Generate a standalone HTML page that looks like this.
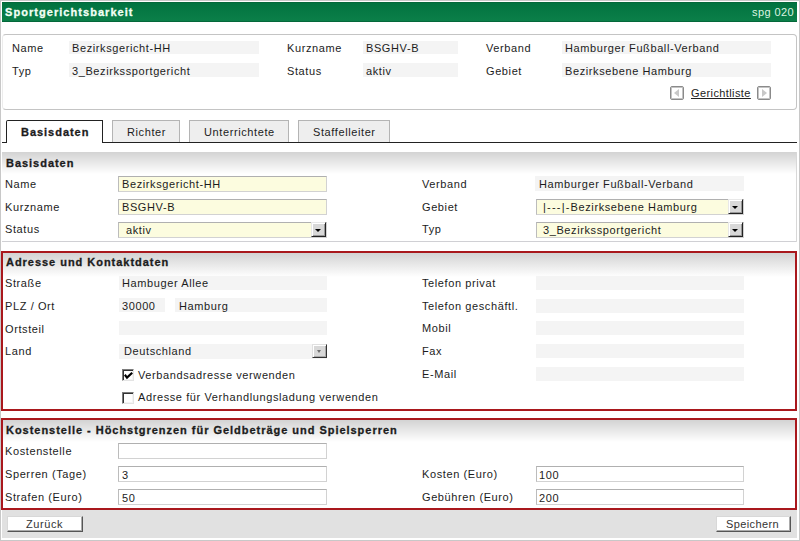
<!DOCTYPE html>
<html><head><meta charset="utf-8">
<style>
*{box-sizing:border-box;margin:0;padding:0}
html,body{width:800px;height:541px;overflow:hidden;background:#fff}
body{position:relative;font-family:"Liberation Sans",sans-serif;font-size:12px;color:#1c1c1c}
.a{position:absolute}
.t{position:absolute;white-space:nowrap;line-height:14px;font-size:11px;letter-spacing:0.6px;}
.b{font-weight:bold;letter-spacing:0.97px;-webkit-text-stroke:0.3px currentColor}
.frame{left:0;top:0;width:800px;height:541px;border:1px solid #c8c8c8}
.title{left:2px;top:2px;width:795px;height:20px;background:linear-gradient(#017340,#0b7f49);border-top:1px solid #04683a;border-bottom:1px solid #04683a}
.info{left:2px;top:34px;width:795px;height:76px;border:1px solid #c4c4c4;border-left-color:#ececec;border-radius:4px}
.fg{position:absolute;background:#f4f4f4}
.tab{position:absolute;top:120px;height:22px;background:#eee;border:1px solid #b4b4b4;border-bottom:none}
.tabact{position:absolute;top:120px;height:23px;background:#fff;border:1px solid #222;border-bottom:none;border-radius:2px 0 0 0}
.sec{position:absolute;left:2px;width:795px}
.grad{position:absolute;background:linear-gradient(#d3d3d3,#fff)}
.red{position:absolute;border:2px solid #a9181d}
.inp{position:absolute;background:#fcfcdf;border:1px solid;border-color:#b0b0b0 #d2d2d2 #d2d2d2 #bcbcbc}
.inw{position:absolute;background:#fff;border:1px solid;border-color:#b0b0b0 #d2d2d2 #d2d2d2 #bcbcbc}
.sel{position:absolute;background:#fcfcdf;border:1px solid;border-color:#b0b0b0 #d2d2d2 #d2d2d2 #bcbcbc}
.arr{position:absolute;width:15px;height:15px;background:#d8d8d8;border:1px solid;border-color:#e8e8e8 #222 #222 #e8e8e8;box-shadow:inset 1px 1px 0 #fff,inset -1px -1px 0 #999}
.arr:after{content:"";position:absolute;left:3px;top:6px;border-left:3px solid transparent;border-right:3px solid transparent;border-top:3px solid #000}
.btn{position:absolute;background:#fff;border:1px solid;border-color:#d8d8d8 #555 #555 #d8d8d8;box-shadow:inset -1px -1px 0 #aaa}
.cb{position:absolute;width:12px;height:12px;background:#fff;border:1px solid;border-color:#7c7c7c #e4e4e4 #e4e4e4 #7c7c7c;box-shadow:inset 1px 1px 0 #333,inset -1px -1px 0 #f4f4f4}
</style></head><body>
<div class="a frame"></div>
<div class="a title"></div>
<div class="t b" style="left:5px;top:5px;color:#f2fff4;letter-spacing:1.05px">Sportgerichtsbarkeit</div>
<div class="t" style="left:752px;top:5px;color:#dcf5e2;letter-spacing:0.4px">spg 020</div>

<!-- info panel -->
<div class="a info"></div>
<div class="t" style="left:12px;top:41px">Name</div>
<div class="fg" style="left:69px;top:41px;width:190px;height:13px"></div>
<div class="t" style="left:72px;top:41px">Bezirksgericht-HH</div>
<div class="t" style="left:12px;top:64px">Typ</div>
<div class="fg" style="left:69px;top:63px;width:190px;height:14px"></div>
<div class="t" style="left:72px;top:64px">3_Bezirkssportgericht</div>

<div class="t" style="left:287px;top:41px">Kurzname</div>
<div class="fg" style="left:363px;top:41px;width:95px;height:13px"></div>
<div class="t" style="left:366px;top:41px">BSGHV-B</div>
<div class="t" style="left:287px;top:64px">Status</div>
<div class="fg" style="left:363px;top:63px;width:95px;height:14px"></div>
<div class="t" style="left:366px;top:64px">aktiv</div>

<div class="t" style="left:486px;top:41px">Verband</div>
<div class="fg" style="left:562px;top:41px;width:209px;height:13px"></div>
<div class="t" style="left:565px;top:41px">Hamburger Fußball-Verband</div>
<div class="t" style="left:486px;top:64px">Gebiet</div>
<div class="fg" style="left:562px;top:63px;width:209px;height:14px"></div>
<div class="t" style="left:565px;top:64px">Bezirksebene Hamburg</div>

<div class="a" style="left:670px;top:86px;width:14px;height:14px;border:1px solid #8a8a8a;border-radius:2px;box-shadow:inset 0 0 0 1px #c4c4c4;background:#fff"></div>
<div class="a" style="left:674px;top:89px;width:0;height:0;border-top:4px solid transparent;border-bottom:4px solid transparent;border-right:5px solid #c8c8c8"></div>
<div class="t" style="left:691px;top:86px;text-decoration:underline;letter-spacing:0.4px;color:#222">Gerichtliste</div>
<div class="a" style="left:757px;top:86px;width:14px;height:14px;border:1px solid #8a8a8a;border-radius:2px;box-shadow:inset 0 0 0 1px #c4c4c4;background:#fff"></div>
<div class="a" style="left:762px;top:89px;width:0;height:0;border-top:4px solid transparent;border-bottom:4px solid transparent;border-left:5px solid #c8c8c8"></div>

<!-- tabs -->
<div class="a" style="left:2px;top:142px;width:795px;height:1px;background:#222"></div>
<div class="tabact" style="left:6px;width:97px"></div>
<div class="t b" style="left:21px;top:125px">Basisdaten</div>
<div class="tab" style="left:112px;width:68px"></div>
<div class="t" style="left:127px;top:125px">Richter</div>
<div class="tab" style="left:189px;width:100px"></div>
<div class="t" style="left:204px;top:125px">Unterrichtete</div>
<div class="tab" style="left:298px;width:92px"></div>
<div class="t" style="left:313px;top:125px">Staffelleiter</div>

<!-- section 1 -->
<div class="grad" style="left:2px;top:152px;width:795px;height:22px"></div>
<div class="a" style="left:2px;top:241px;width:795px;height:1px;background:#d0d0d4"></div>
<div class="a" style="left:796px;top:152px;width:1px;height:90px;background:#d8d8d8"></div>
<div class="t b" style="left:6px;top:156px">Basisdaten</div>
<div class="t" style="left:5px;top:177px">Name</div>
<div class="inp" style="left:118px;top:176px;width:209px;height:16px"></div>
<div class="t" style="left:122px;top:177px">Bezirksgericht-HH</div>
<div class="t" style="left:5px;top:200px">Kurzname</div>
<div class="inp" style="left:118px;top:199px;width:209px;height:16px"></div>
<div class="t" style="left:122px;top:200px">BSGHV-B</div>
<div class="t" style="left:5px;top:222px">Status</div>
<div class="sel" style="left:118px;top:222px;width:209px;height:16px"></div>
<div class="arr" style="left:311px;top:222px"></div>
<div class="t" style="left:126px;top:223px">aktiv</div>

<div class="t" style="left:422px;top:177px">Verband</div>
<div class="fg" style="left:535px;top:176px;width:209px;height:15px"></div>
<div class="t" style="left:539px;top:177px">Hamburger Fußball-Verband</div>
<div class="t" style="left:422px;top:200px">Gebiet</div>
<div class="sel" style="left:536px;top:199px;width:208px;height:16px"></div>
<div class="arr" style="left:728px;top:199px"></div>
<div class="t" style="left:543px;top:200px"><span style="letter-spacing:1.2px">|---|-</span>Bezirksebene Hamburg</div>
<div class="t" style="left:422px;top:222px">Typ</div>
<div class="sel" style="left:536px;top:222px;width:208px;height:16px"></div>
<div class="arr" style="left:728px;top:222px"></div>
<div class="t" style="left:543px;top:223px">3_Bezirkssportgericht</div>

<!-- section 2 -->
<div class="red" style="left:1px;top:251px;width:796px;height:160px"></div>
<div class="grad" style="left:3px;top:253px;width:792px;height:24px"></div>
<div class="t b" style="left:6px;top:255px">Adresse und Kontaktdaten</div>
<div class="t" style="left:5px;top:276px">Straße</div>
<div class="fg" style="left:119px;top:276px;width:208px;height:14px"></div>
<div class="t" style="left:122px;top:276px">Hambuger Allee</div>
<div class="t" style="left:5px;top:299px">PLZ / Ort</div>
<div class="fg" style="left:119px;top:298px;width:46px;height:14px"></div>
<div class="t" style="left:122px;top:299px">30000</div>
<div class="fg" style="left:175px;top:298px;width:152px;height:14px"></div>
<div class="t" style="left:179px;top:299px">Hamburg</div>
<div class="t" style="left:5px;top:322px">Ortsteil</div>
<div class="fg" style="left:119px;top:321px;width:208px;height:14px"></div>
<div class="t" style="left:5px;top:344px">Land</div>
<div class="fg" style="left:119px;top:344px;width:208px;height:15px"></div>
<div class="a" style="left:312px;top:344px;width:15px;height:14px;background:#d8d8d8;border:1px solid;border-color:#e0e0e0 #333 #333 #e0e0e0;box-shadow:inset 1px 1px 0 #fff,inset -1px -1px 0 #aaa"></div>
<div class="a" style="left:317px;top:350px;border-left:2.5px solid transparent;border-right:2.5px solid transparent;border-top:3px solid #707070"></div>
<div class="t" style="left:124px;top:344px">Deutschland</div>
<div class="cb" style="left:122px;top:369px"></div>
<svg class="a" style="left:124px;top:372px" width="9" height="8" viewBox="0 0 9 8"><path d="M0.8 2.8 L3 5.6 L8.2 0.8" stroke="#000" stroke-width="2.2" fill="none"/></svg>
<div class="t" style="left:138px;top:368px">Verbandsadresse verwenden</div>
<div class="cb" style="left:122px;top:392px"></div>
<div class="t" style="left:138px;top:390px">Adresse für Verhandlungsladung verwenden</div>

<div class="t" style="left:422px;top:276px">Telefon privat</div>
<div class="fg" style="left:536px;top:276px;width:208px;height:14px"></div>
<div class="t" style="left:422px;top:299px">Telefon geschäftl.</div>
<div class="fg" style="left:536px;top:299px;width:208px;height:14px"></div>
<div class="t" style="left:422px;top:321px">Mobil</div>
<div class="fg" style="left:536px;top:321px;width:208px;height:14px"></div>
<div class="t" style="left:422px;top:344px">Fax</div>
<div class="fg" style="left:536px;top:344px;width:208px;height:14px"></div>
<div class="t" style="left:422px;top:367px">E-Mail</div>
<div class="fg" style="left:536px;top:367px;width:208px;height:14px"></div>

<!-- section 3 -->
<div class="red" style="left:1px;top:418px;width:796px;height:92px"></div>
<div class="grad" style="left:3px;top:420px;width:792px;height:22px"></div>
<div class="t b" style="left:6px;top:423px">Kostenstelle - Höchstgrenzen für Geldbeträge und Spielsperren</div>
<div class="t" style="left:5px;top:444px">Kostenstelle</div>
<div class="inw" style="left:118px;top:443px;width:209px;height:16px"></div>
<div class="t" style="left:5px;top:467px">Sperren (Tage)</div>
<div class="inw" style="left:118px;top:466px;width:209px;height:16px"></div>
<div class="t" style="left:122px;top:468px">3</div>
<div class="t" style="left:5px;top:490px">Strafen (Euro)</div>
<div class="inw" style="left:118px;top:489px;width:209px;height:16px"></div>
<div class="t" style="left:122px;top:491px">50</div>
<div class="t" style="left:422px;top:467px">Kosten (Euro)</div>
<div class="inw" style="left:536px;top:466px;width:208px;height:16px"></div>
<div class="t" style="left:539px;top:468px">100</div>
<div class="t" style="left:422px;top:490px">Gebühren (Euro)</div>
<div class="inw" style="left:536px;top:489px;width:208px;height:16px"></div>
<div class="t" style="left:539px;top:491px">200</div>

<!-- bottom bar -->
<div class="a" style="left:2px;top:510px;width:795px;height:28px;background:#e1e1e1"></div>
<div class="btn" style="left:7px;top:516px;width:76px;height:16px"></div>
<div class="t" style="left:26px;top:517px;color:#333">Zurück</div>
<div class="btn" style="left:716px;top:516px;width:75px;height:16px"></div>
<div class="t" style="left:726px;top:517px;color:#333;letter-spacing:0.4px">Speichern</div>
</body></html>
